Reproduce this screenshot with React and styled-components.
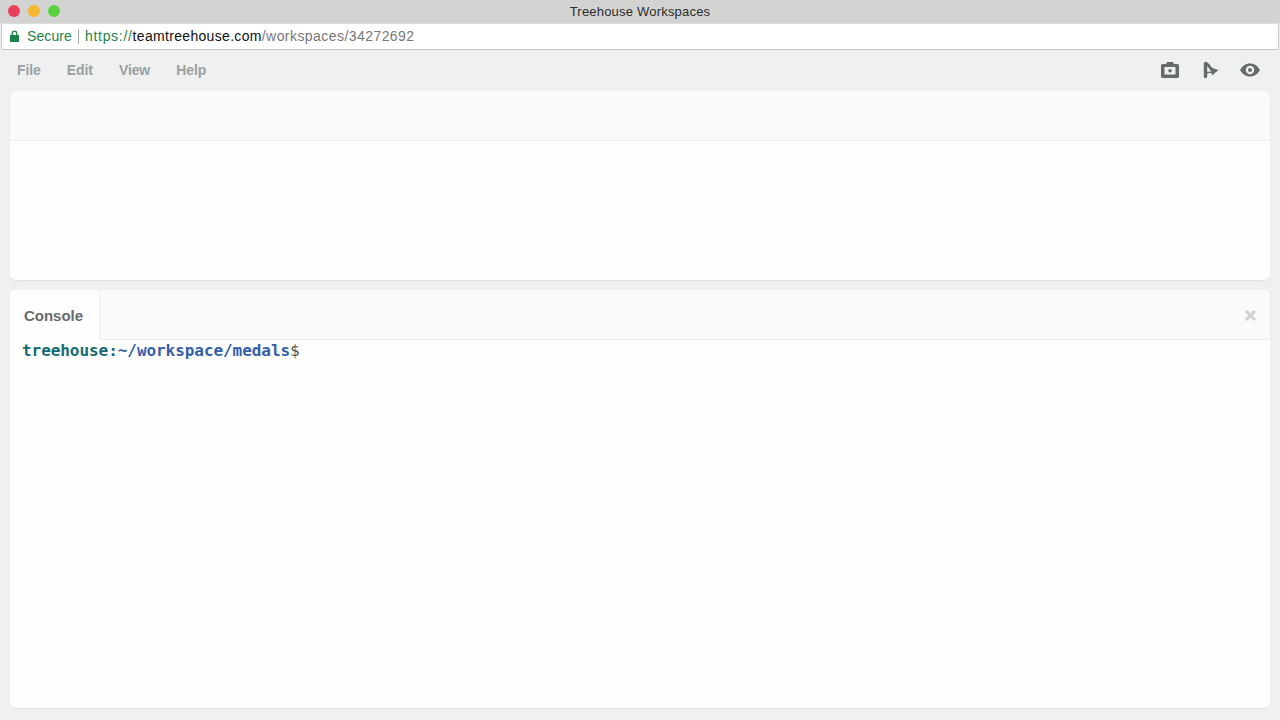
import React from 'react';
import styled, { createGlobalStyle } from 'styled-components';

const COLORS = {
  page: '#eef1f0',
  chrome: '#d3d4d2',
  panel: '#fefefd',
  header: '#f9faf9',
  line: '#eceeec',
  menu: '#9a9fa2',
  icon: '#666a6b',
  green: '#1d8348',
  teal: '#156a73',
  blue: '#3560a8',
};

const GlobalStyle = createGlobalStyle`
  html, body {
    margin: 0;
    height: 100%;
    overflow: hidden;
    background: ${COLORS.page};
    font-family: 'Liberation Sans', Arial, sans-serif;
  }
  #root { height: 100%; }
`;

const Page = styled.div`
  height: 720px;
  display: flex;
  flex-direction: column;
`;

const TitleBar = styled.div`
  height: 23px;
  flex: none;
  background: ${COLORS.chrome};
  display: grid;
  grid-template-columns: 1fr auto 1fr;
  align-items: center;
  padding: 0 8px 1px;
  box-sizing: border-box;
`;

const Lights = styled.div`
  display: flex;
  gap: 8px;
`;

const Light = styled.span`
  width: 12px;
  height: 12px;
  border-radius: 50%;
  background: ${p => p.$color};
`;

const WindowTitle = styled.div`
  font-size: 13px;
  letter-spacing: 0.2px;
  color: #2c2c2c;
`;

const UrlBar = styled.div`
  height: 27px;
  flex: none;
  margin: 0 1px;
  box-sizing: border-box;
  background: #fff;
  border: 1px solid #c6c8c7;
  border-top-color: #dcdddc;
  border-radius: 2px;
  display: flex;
  align-items: center;
  padding: 0 0 1px 8px;
  font-size: 14px;
`;

const LockIcon = styled.svg`
  width: 9px;
  height: 12px;
  fill: ${COLORS.green};
  margin-right: 8px;
`;

const Secure = styled.span`
  color: ${COLORS.green};
  letter-spacing: 0.1px;
`;

const UrlDivider = styled.span`
  width: 1px;
  height: 15px;
  background: #a9a9a9;
  margin: 0 6px;
`;

const UrlPart = styled.span`
  color: ${p => p.$color};
  letter-spacing: ${p => p.$spacing}px;
`;

const MenuRow = styled.div`
  height: 41px;
  flex: none;
  box-sizing: border-box;
  display: flex;
  align-items: center;
  justify-content: space-between;
  padding: 0 20px 2px 17px;
`;

const Menu = styled.nav`
  display: flex;
  gap: 26.3px;
`;

const MenuItem = styled.span`
  font-size: 14px;
  font-weight: 700;
  letter-spacing: -0.15px;
  color: ${COLORS.menu};
`;

const Tools = styled.div`
  display: flex;
  align-items: center;
  gap: 20px;
`;

const ToolIcon = styled.svg`
  width: 20px;
  height: 20px;
  fill: ${COLORS.icon};
  display: block;
`;

const Panels = styled.main`
  flex: 1;
  display: flex;
  flex-direction: column;
  gap: 10px;
  padding: 0 10px 12px;
  min-height: 0;
`;

const Panel = styled.section`
  background: ${COLORS.panel};
  border-radius: 6px;
  overflow: hidden;
  display: flex;
  flex-direction: column;
  box-shadow: 0 1px 1px #dfe2e1;
  ${p => (p.$grow ? 'flex: 1;' : 'height: 189px; flex: none;')}
`;

const PanelHeader = styled.header`
  height: 50px;
  flex: none;
  box-sizing: border-box;
  background: ${COLORS.header};
  border-bottom: 1px solid ${COLORS.line};
  display: flex;
  align-items: stretch;
  justify-content: space-between;
`;

const Tab = styled.div`
  width: 90px;
  margin-bottom: -1px;
  box-sizing: border-box;
  padding-right: 2px;
  background: ${COLORS.panel};
  border-right: 1px solid ${COLORS.line};
  display: flex;
  align-items: center;
  justify-content: center;
  font-size: 15px;
  font-weight: 700;
  color: #676b6c;
`;

const CloseButton = styled.span`
  display: flex;
  align-items: center;
  padding: 1px 13px 0 0;
`;

const CloseIcon = styled.svg`
  width: 13px;
  height: 13px;
  stroke: #ced1d0;
  stroke-width: 3;
  fill: none;
`;

const Terminal = styled.div`
  flex: 1;
  padding: 0 12px;
  font-family: 'DejaVu Sans Mono', 'Liberation Mono', monospace;
  font-size: 16px;
  letter-spacing: -0.06px;
  line-height: 21px;
  font-weight: 700;
`;

const Host = styled.span`
  color: ${COLORS.teal};
`;

const Path = styled.span`
  color: ${COLORS.blue};
`;

const Dollar = styled.span`
  color: #555;
  font-weight: 400;
`;

export default function App() {
  return (
    <Page>
      <GlobalStyle />
      <TitleBar>
        <Lights>
          <Light $color="#e5405e" />
          <Light $color="#f5b82e" />
          <Light $color="#5bd13f" />
        </Lights>
        <WindowTitle>Treehouse Workspaces</WindowTitle>
      </TitleBar>
      <UrlBar>
        <LockIcon viewBox="0 0 9 12">
          <path d="M1.6 5V3.4a2.9 2.9 0 0 1 5.8 0V5H9v7H0V5h1.6zm1.3 0h3.2V3.4a1.6 1.6 0 0 0-3.2 0V5z" />
        </LockIcon>
        <Secure>Secure</Secure>
        <UrlDivider />
        <UrlPart $color={COLORS.green} $spacing={0.7}>https://</UrlPart>
        <UrlPart $color="#111" $spacing={0.32}>teamtreehouse.com</UrlPart>
        <UrlPart $color="#777" $spacing={0.44}>/workspaces/34272692</UrlPart>
      </UrlBar>
      <MenuRow>
        <Menu>
          <MenuItem>File</MenuItem>
          <MenuItem>Edit</MenuItem>
          <MenuItem>View</MenuItem>
          <MenuItem>Help</MenuItem>
        </Menu>
        <Tools>
          <ToolIcon viewBox="0 0 20 20">
            <path fillRule="evenodd" d="M2.5 4H6l1-2h6l1 2h3.5A1.5 1.5 0 0 1 19 5.5v11a1.5 1.5 0 0 1-1.5 1.5h-15A1.5 1.5 0 0 1 1 16.5v-11A1.5 1.5 0 0 1 2.5 4zm2 3v7.5h11V7h-11zM10 9a1.8 1.8 0 1 1 0 3.6A1.8 1.8 0 0 1 10 9z" />
          </ToolIcon>
          <ToolIcon viewBox="0 0 20 20">
            <path d="M5.5 3.5V16.5" stroke="#666a6b" strokeWidth="3.4" strokeLinecap="round" fill="none" />
            <path d="M5.5 3C8 3.5 9.500 7 12 10" stroke="#666a6b" strokeWidth="2.8" fill="none" />
            <path d="M5.5 13.500C7.500 12.500 10 12 13 12.500" stroke="#666a6b" strokeWidth="1.500" fill="none" />
            <path d="M10.500 7.500L18.500 10 12 15.500z" />
          </ToolIcon>
          <ToolIcon viewBox="0 0 20 20">
            <path fillRule="evenodd" d="M10 3.5c4.3 0 8 2.7 10 6.5-2 3.8-5.7 6.5-10 6.5S2 13.8 0 10c2-3.8 5.7-6.5 10-6.5zm0 2.3a4.2 4.2 0 1 0 0 8.4 4.2 4.2 0 0 0 0-8.4zm0 2.200a2 2 0 1 1 0 4 2 2 0 0 1 0-4z" />
          </ToolIcon>
        </Tools>
      </MenuRow>
      <Panels>
        <Panel>
          <PanelHeader />
        </Panel>
        <Panel $grow>
          <PanelHeader>
            <Tab>Console</Tab>
            <CloseButton>
              <CloseIcon viewBox="0 0 13 13">
                <path d="M2 2l9 9M11 2l-9 9" />
              </CloseIcon>
            </CloseButton>
          </PanelHeader>
          <Terminal>
            <Host>treehouse:</Host>
            <Path>~/workspace/medals</Path>
            <Dollar>$</Dollar>
          </Terminal>
        </Panel>
      </Panels>
    </Page>
  );
}
